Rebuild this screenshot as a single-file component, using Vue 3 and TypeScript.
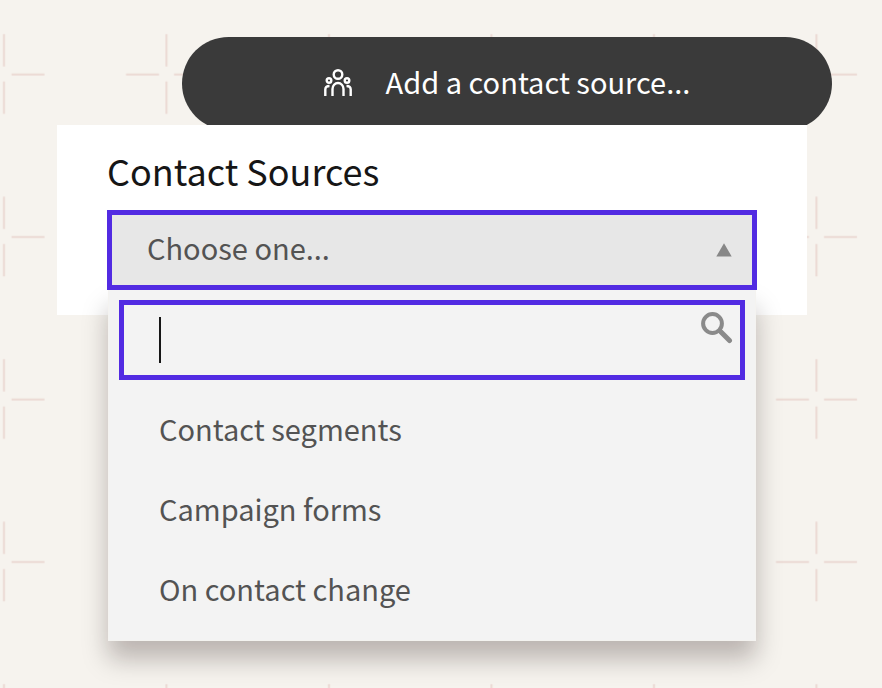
<script setup lang="ts">
import { computed, ref } from 'vue'

interface ContactSource {
  id: string
  label: string
}

const sources: ContactSource[] = [
  { id: 'segments', label: 'Contact segments' },
  { id: 'forms', label: 'Campaign forms' },
  { id: 'change', label: 'On contact change' },
]

const open = ref(true)
const query = ref('')
const selected = ref<ContactSource | null>(null)

const matches = computed(() =>
  sources.filter((s) => s.label.toLowerCase().includes(query.value.trim().toLowerCase())),
)

function choose(source: ContactSource) {
  selected.value = source
  open.value = false
}
</script>

<template>
  <main class="canvas">
    <svg class="grid" aria-hidden="true">
      <defs>
        <pattern id="crosses" x="-77" y="-7" width="162.5" height="162.5" patternUnits="userSpaceOnUse">
          <path d="M40.5 81.5h33M88.5 81.5h33M81 41v32.500M81 88.500v32.500" />
        </pattern>
      </defs>
      <rect width="100%" height="100%" fill="url(#crosses)" />
    </svg>

    <div class="builder">
      <button class="add" type="button" @click="open = true">
        <svg class="people" viewBox="0 0 28 28" aria-hidden="true">
          <circle cx="14" cy="5.500" r="4.300" />
          <circle cx="5" cy="11.500" r="2.300" />
          <circle cx="23" cy="11.500" r="2.300" />
          <path d="M8.500 27V20a5.500 6 0 0 1 11 0v7" />
          <path d="M1.300 27v-6.500q0-3.500 4.200-3.500M26.700 27v-6.500q0-3.500-4.200-3.500" />
        </svg>
        <span>Add a contact source...</span>
      </button>

      <section class="panel">
        <h1 id="sources-title" class="title">Contact Sources</h1>
        <div class="picker">
          <button
            class="trigger"
            type="button"
            aria-haspopup="listbox"
            aria-labelledby="sources-title"
            :aria-expanded="open"
            @click="open = !open"
          >
            <span class="value">{{ selected ? selected.label : 'Choose one...' }}</span>
            <svg class="arrow" viewBox="0 0 16 14" aria-hidden="true"><path d="M8 .3 15.700 13.500H.3z" /></svg>
          </button>

          <div v-if="open" class="dropdown">
            <label class="search">
              <span class="caret"></span>
              <input v-model="query" class="field" type="text" aria-label="Search contact sources" />
              <svg class="lens" viewBox="0 0 32 32" aria-hidden="true">
                <circle cx="11.500" cy="11.500" r="9.400" />
                <path class="neck" d="m18 18 3 3" />
                <path class="handle" d="m20.500 20.500 8 8" />
              </svg>
            </label>
            <ul class="options" role="listbox" aria-labelledby="sources-title">
              <li v-for="source in matches" :key="source.id" role="option" :aria-selected="selected?.id === source.id">
                <button class="option" type="button" @click="choose(source)">{{ source.label }}</button>
              </li>
            </ul>
          </div>
        </div>
      </section>
    </div>
  </main>
</template>

<style>
body {
  margin: 0;
  background: #f6f3ee;
}
</style>

<style scoped>
.canvas {
  position: relative;
  box-sizing: border-box;
  min-height: 100vh;
  overflow: hidden;
  font-family: 'Noto Sans CJK SC', 'Open Sans', sans-serif;
}

.canvas button,
.canvas input {
  font: inherit;
}

.grid {
  position: absolute;
  inset: 0;
  width: 100%;
  height: 100%;
}

.grid path {
  fill: none;
  stroke: #ebd9d4;
  stroke-width: 2;
}

.builder {
  position: relative;
  display: flex;
  flex-direction: column;
  padding: 37px 50px 0 57px;
}

.canvas .add {
  display: flex;
  align-items: center;
  justify-content: center;
  gap: 34px;
  height: 93px;
  margin-left: 125px;
  padding: 0 0 6px;
  border: 0;
  border-radius: 47px;
  background: #3a3a3a;
  color: #fff;
  font-size: 29px;
  line-height: 40px;
  cursor: pointer;
}

.people {
  flex: none;
  width: 28px;
  height: 28px;
  margin-top: 4px;
  fill: none;
  stroke: #fff;
  stroke-width: 2.4;
}

.panel {
  position: relative;
  margin: -5px 25px 0 0;
  padding: 25px 50px;
  background: #fff;
}

.title {
  margin: 0 0 20px;
  color: #161616;
  font-size: 36px;
  font-weight: 400;
  line-height: 40px;
}

.picker {
  position: relative;
}

.canvas .trigger {
  position: relative;
  z-index: 1;
  display: flex;
  align-items: center;
  justify-content: space-between;
  box-sizing: border-box;
  width: 100%;
  height: 80px;
  padding: 0 20px 0 35px;
  border: 5px solid #522be2;
  background: #e7e7e7;
  color: #535353;
  font-size: 29px;
  line-height: 40px;
  cursor: pointer;
}

.value {
  padding-bottom: 7px;
}

.arrow {
  width: 16px;
  height: 14px;
  fill: #878787;
}

.dropdown {
  position: absolute;
  top: 100%;
  left: 1px;
  right: 1px;
  padding: 10px 10px 9px;
  border: 1px solid #f4f3f0;
  border-top: 0;
  background: #f3f3f3;
  box-shadow: 0 18px 24px rgba(20, 0, 0, 0.26);
}

.search {
  display: flex;
  align-items: center;
  box-sizing: border-box;
  height: 80px;
  padding: 0 7px 0 35px;
  border: 5px solid #522be2;
  cursor: text;
}

.caret {
  width: 2px;
  height: 46px;
  background: #161616;
}

.canvas .field {
  flex: 1;
  min-width: 0;
  height: 60px;
  padding: 0;
  border: 0;
  outline: 0;
  background: transparent;
  color: #535353;
  caret-color: transparent;
  font-size: 29px;
}

.lens {
  align-self: flex-start;
  width: 32px;
  height: 32px;
  margin-top: 7px;
  fill: none;
  stroke: #8a8a8a;
  stroke-width: 4;
}

.lens .handle {
  stroke-width: 5;
  stroke-linecap: round;
}

.options {
  margin: 11px 0 0;
  padding: 0;
  list-style: none;
}

.canvas .option {
  display: block;
  width: 100%;
  height: 80px;
  padding: 0 40px 7px;
  border: 0;
  background: transparent;
  color: #535353;
  font-size: 29px;
  line-height: 40px;
  text-align: left;
  cursor: pointer;
}
</style>
